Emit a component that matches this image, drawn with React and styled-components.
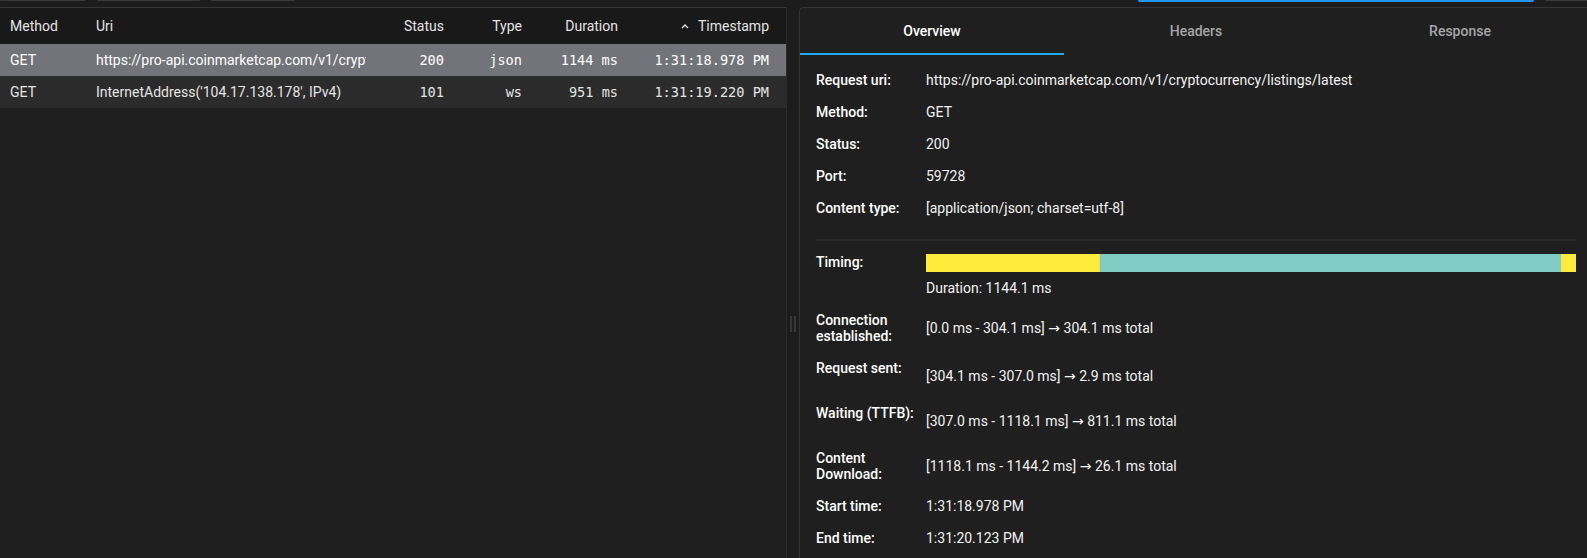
import styled, { createGlobalStyle } from 'styled-components';

const GlobalStyle = createGlobalStyle`
  html, body {
    margin: 0;
    padding: 0;
    background: #1c1c1c;
    overflow: hidden;
  }
  body {
    font-family: Roboto, "Noto Sans", sans-serif;
    color: #e8e8e8;
  }
`;

const requests = [
    {
        method: 'GET',
        uri: 'https://pro-api.coinmarketcap.com/v1/cryptocurrency/listings/latest',
        status: 200,
        type: 'json',
        duration: '1144 ms',
        timestamp: '1:31:18.978 PM',
        selected: true,
    },
    {
        method: 'GET',
        uri: "InternetAddress('104.17.138.178', IPv4)",
        status: 101,
        type: 'ws',
        duration: '951 ms',
        timestamp: '1:31:19.220 PM',
        selected: false,
    },
];

const columns = [
    { key: 'method', label: 'Method' },
    { key: 'uri', label: 'Uri' },
    { key: 'status', label: 'Status', right: true, mono: true },
    { key: 'type', label: 'Type', right: true, mono: true },
    { key: 'duration', label: 'Duration', right: true, mono: true },
    { key: 'timestamp', label: 'Timestamp', right: true, mono: true, sorted: true },
];

const phases = [
    { name: 'connect', ms: 304.1, color: '#ffeb3b' },
    { name: 'send', ms: 2.9, color: '#f5dc3a' },
    { name: 'wait', ms: 811.1, color: '#80cbc4' },
    { name: 'download', ms: 26.1, color: '#ffeb3b' },
];
const total = phases.reduce((s, p) => s + p.ms, 0);

const spans = [
    { label: 'Connection established:', from: '0.0', to: '304.1', total: '304.1', gap: 16 },
    { label: 'Request sent:', from: '304.1', to: '307.0', total: '2.9', gap: 16 },
    { label: 'Waiting (TTFB):', from: '307.0', to: '1118.1', total: '811.1', gap: 13 },
    { label: 'Content Download:', from: '1118.1', to: '1144.2', total: '26.1', gap: 13 },
];

function SortIcon() {
    return (
        <svg width="8" height="6" viewBox="0 0 8 6">
            <path d="M1 5 L4 2 L7 5" fill="none" stroke="#e0e0e0" strokeWidth="1.4" />
        </svg>
    );
}

export default function App() {
    return (
        <>
            <GlobalStyle />
            <Page>
                <Toolbar>
                    <ToolEdge $w={86} />
                    <ToolEdge $w={103} />
                    <ToolEdge $w={84} />
                    <Spacer />
                    <ToolEdge $w={396} $active />
                    <ToolEdge $w={42} />
                </Toolbar>
                <Main>
                    <ListPanel>
                        <Row $head>
                            {columns.map((c) => (
                                <Cell key={c.key} $right={c.right}>
                                    {c.sorted && <SortIcon />}
                                    {c.label}
                                </Cell>
                            ))}
                        </Row>
                        {requests.map((r, i) => (
                            <Row key={i} $selected={r.selected}>
                                {columns.map((c) => (
                                    <Cell key={c.key} $right={c.right} $mono={c.mono}>
                                        {r[c.key]}
                                    </Cell>
                                ))}
                            </Row>
                        ))}
                    </ListPanel>
                    <Splitter>
                        <Grip />
                    </Splitter>
                    <DetailPanel>
                        <Tabs>
                            <Tab $active>Overview</Tab>
                            <Tab>Headers</Tab>
                            <Tab>Response</Tab>
                        </Tabs>
                        <Content>
                            <InfoRow><Label>Request uri:</Label><Value>https://pro-api.coinmarketcap.com/v1/cryptocurrency/listings/latest</Value></InfoRow>
                            <InfoRow><Label>Method:</Label><Value>GET</Value></InfoRow>
                            <InfoRow><Label>Status:</Label><Value>200</Value></InfoRow>
                            <InfoRow><Label>Port:</Label><Value>59728</Value></InfoRow>
                            <InfoRow><Label>Content type:</Label><Value>[application/json; charset=utf-8]</Value></InfoRow>
                            <Divider />
                            <TimingRow $gap={13}>
                                <Label>Timing:</Label>
                                <div>
                                    <Bar>
                                        {phases.map((p) => (
                                            <Segment key={p.name} $color={p.color} style={{ width: `${(p.ms / total) * 100}%` }} />
                                        ))}
                                    </Bar>
                                    <Duration>Duration: 1144.1 ms</Duration>
                                </div>
                            </TimingRow>
                            {spans.map((s) => (
                                <TimingRow key={s.label} $gap={s.gap}>
                                    <Label>{s.label}</Label>
                                    <Value $tall>
                                        [{s.from} ms - {s.to} ms]&nbsp;<Arrow>→</Arrow>&nbsp;{s.total} ms total
                                    </Value>
                                </TimingRow>
                            ))}
                            <InfoRow $gap={8}><Label>Start time:</Label><Value>1:31:18.978 PM</Value></InfoRow>
                            <InfoRow><Label>End time:</Label><Value>1:31:20.123 PM</Value></InfoRow>
                        </Content>
                    </DetailPanel>
                </Main>
            </Page>
        </>
    );
}

const Page = styled.div`
    display: flex;
    flex-direction: column;
    width: 1587px;
    height: 558px;
    background: #1c1c1c;
`

const Toolbar = styled.div`
    display: flex;
    align-items: flex-start;
    gap: 11px;
    height: 7px;
    flex-shrink: 0;
`

const ToolEdge = styled.div`
    width: ${(p) => p.$w}px;
    height: ${(p) => (p.$active ? 2 : 1)}px;
    background: ${(p) => (p.$active ? '#2196f3' : '#3a3a3a')};
    border-radius: 0 0 2px 2px;
`

const Spacer = styled.div`
    flex: 1;
`

const Main = styled.div`
    display: flex;
    flex: 1;
    min-height: 0;
`

const ListPanel = styled.div`
    width: 786px;
    flex-shrink: 0;
    background: #1e1e1e;
    border-top: 1px solid #343434;
    border-right: 1px solid #2c2c2c;
`

const Row = styled.div`
    display: grid;
    grid-template-columns: 86px 280px 88px 78px 96px 151px;
    align-items: center;
    height: ${(p) => (p.$head ? 36 : 32)}px;
    background: ${(p) => (p.$head ? '#191919' : p.$selected ? '#727479' : '#2b2b2b')};
    color: ${(p) => (p.$selected ? '#ffffff' : '#e4e4e4')};
`

const Cell = styled.div`
    display: flex;
    align-items: center;
    justify-content: ${(p) => (p.$right ? 'flex-end' : 'flex-start')};
    gap: 9px;
    padding: 0 10px;
    overflow: hidden;
    white-space: nowrap;
    font-family: ${(p) => (p.$mono ? '"DejaVu Sans Mono", "Liberation Mono", monospace' : 'Roboto, "Noto Sans", sans-serif')};
    font-size: ${(p) => (p.$mono ? 13.6 : 14)}px;
`

const Splitter = styled.div`
    width: 12px;
    flex-shrink: 0;
    display: flex;
    justify-content: center;
    padding-top: 309px;
`

const Grip = styled.div`
    width: 2px;
    height: 16px;
    border-left: 2px solid #363636;
    border-right: 2px solid #363636;
`

const DetailPanel = styled.div`
    width: 792px;
    flex-shrink: 0;
    background: #1f1f1f;
    border-top: 1px solid #343434;
    border-left: 1px solid #343434;
    border-top-left-radius: 5px;
`

const Tabs = styled.div`
    display: flex;
    height: 47px;
`

const Tab = styled.div`
    flex: 1;
    display: flex;
    align-items: center;
    justify-content: center;
    font-size: 14px;
    font-weight: 500;
    color: ${(p) => (p.$active ? '#ffffff' : '#a6a6a6')};
    border-bottom: 2px solid ${(p) => (p.$active ? '#1eaaf1' : 'transparent')};
`

const Content = styled.div`
    padding: 9px 16px 0 16px;
    font-size: 14px;
`

const InfoRow = styled.div`
    display: flex;
    align-items: center;
    height: 32px;
    margin-top: ${(p) => p.$gap || 0}px;
`

const TimingRow = styled.div`
    display: flex;
    align-items: flex-start;
    margin-top: ${(p) => p.$gap}px;
`

const Label = styled.div`
    width: 110px;
    flex-shrink: 0;
    font-weight: 500;
    line-height: 16px;
    color: #ffffff;
`

const Value = styled.div`
    display: flex;
    align-items: center;
    min-height: ${(p) => (p.$tall ? 32 : 0)}px;
    color: #f2f2f2;
    white-space: nowrap;
`

const Arrow = styled.span`
    font-family: "DejaVu Sans", sans-serif;
    font-size: 14px;
`

const Divider = styled.div`
    height: 2px;
    margin-top: 15px;
    background: #2a2a2a;
`

const Bar = styled.div`
    display: flex;
    width: 650px;
    height: 18px;
`

const Segment = styled.div`
    height: 100%;
    background: ${(p) => p.$color};
`

const Duration = styled.div`
    margin-top: 8px;
    line-height: 16px;
    color: #f2f2f2;
`
